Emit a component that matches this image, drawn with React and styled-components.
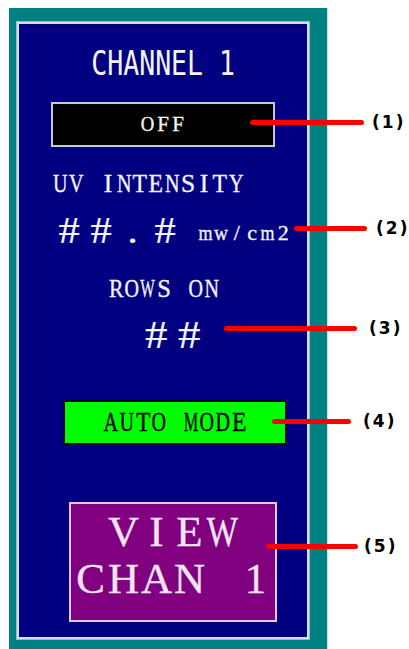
import React from "react";
import styled, { createGlobalStyle } from "styled-components";

const Global = createGlobalStyle`
  html, body { margin: 0; padding: 0; background: #ffffff; }
  body { width: 409px; height: 649px; overflow: hidden; }
`;

const Stage = styled.div`
  position: relative;
  width: 409px;
  height: 649px;
  padding: 8px 0 0 9px;
  box-sizing: border-box;
`;

const Bezel = styled.div`
  width: 319px;
  box-sizing: border-box;
  background: #008080;
  border-right: 1px solid #c8e4e4;
  padding: 14px 18px 10px 8px;
`;

const Panel = styled.div`
  display: flex;
  flex-direction: column;
  align-items: flex-start;
  width: 292px;
  box-sizing: border-box;
  background: #000080;
  border: 2px solid #dcdcf0;
  box-shadow: 0 0 0 1px #86c4c4;
  padding: 22px 0 15px 0;
  font-family: "Liberation Serif", "Times New Roman", serif;
  color: #f4f4f4;
`;

const Title = styled.div`
  align-self: center;
  font-family: "DejaVu Sans Mono", monospace;
  font-size: 34px;
  line-height: 1;
  height: 34px;
  white-space: nowrap;
  transform: scaleX(0.78);
  transform-origin: center;
`;

/* one fixed-width cell per character, like a character-cell HMI font */
const Cell = styled.span`
  display: inline-block;
  width: ${(p) => p.$pitch}px;
  text-align: center;
  white-space: pre;
`;

const Glyph = styled.span`
  display: inline-block;
  margin: 0 ${(p) => p.$m}px;
  transform: scaleX(${(p) => p.$s});
  transform-origin: center;
  -webkit-text-stroke: ${(p) => p.$stroke}px currentColor;
`;

/* Times advance widths (em) for the characters used */
const ADV = {
  U: 0.722, V: 0.722, I: 0.333, N: 0.722, T: 0.611, E: 0.611, S: 0.556,
  Y: 0.722, R: 0.667, O: 0.722, W: 0.944, A: 0.722, M: 0.889, D: 0.722,
  F: 0.556, C: 0.667, H: 0.722, "1": 0.5, m: 0.778, w: 0.722, c: 0.444,
  "/": 0.278, "2": 0.5, "#": 0.5, ".": 0.25, " ": 0.25,
};

const Mono = ({ text, pitch, size, fixed, stroke = 0.35 }) =>
  text.split("").map((ch, i) => {
    const adv = (ADV[ch] ?? 0.6) * size;
    const s = fixed ?? Math.min(1, (pitch - 1.5) / adv);
    const m = s < 1 ? -(adv * (1 - s)) / 2 : 0;
    return (
      <Cell key={i} $pitch={pitch}>
        <Glyph $s={s} $m={m} $stroke={stroke}>{ch === " " ? "\u00a0" : ch}</Glyph>
      </Cell>
    );
  });

const Box = styled.div`
  display: flex;
  align-items: center;
  justify-content: center;
  box-sizing: border-box;
  margin-top: ${(p) => p.$top}px;
  margin-left: ${(p) => p.$left}px;
  width: ${(p) => p.$w}px;
  height: ${(p) => p.$h}px;
  background: ${(p) => p.$bg};
  border: 2px solid ${(p) => p.$border};
  color: ${(p) => p.$fg};
`;

const BoxText = styled.div`
  font-size: ${(p) => p.$size}px;
  line-height: 1;
  white-space: nowrap;
`;

const Label = styled.div`
  margin-top: ${(p) => p.$top}px;
  margin-left: ${(p) => p.$left}px;
  font-size: ${(p) => p.$size}px;
  line-height: 1;
  height: ${(p) => p.$size}px;
  white-space: nowrap;
`;

const ValueRow = styled.div`
  display: flex;
  align-items: flex-start;
  margin-top: ${(p) => p.$top}px;
  margin-left: ${(p) => p.$left}px;
  gap: 17px;
`;

const Hashes = styled.div`
  font-size: ${(p) => p.$size}px;
  line-height: 1;
  height: ${(p) => p.$size}px;
  white-space: nowrap;
`;

const Unit = styled.div`
  margin-top: 10px;
  font-size: 22px;
  line-height: 1;
  white-space: nowrap;
`;

const ViewButton = styled.div`
  display: flex;
  flex-direction: column;
  align-items: center;
  box-sizing: border-box;
  margin-top: 57px;
  margin-left: 50px;
  width: 208px;
  height: 120px;
  padding-top: 4px;
  background: #800080;
  border: 2px solid #e4c8e4;
  color: #f4e4f4;
`;

const ViewLine = styled.div`
  font-size: 43px;
  line-height: 47px;
  height: 47px;
  white-space: nowrap;
`;

const Leader = styled.div`
  position: absolute;
  left: ${(p) => p.$x1}px;
  top: ${(p) => p.$y - 2.5}px;
  width: ${(p) => p.$x2 - p.$x1}px;
  height: 5px;
  border-radius: 3px;
  background: #ff0000;
`;

const Tag = styled.div`
  position: absolute;
  left: ${(p) => p.$x}px;
  top: ${(p) => p.$y - 10}px;
  display: flex;
  gap: 2px;
  height: 20px;
  line-height: 20px;
  font-family: "DejaVu Sans", sans-serif;
  font-weight: bold;
  font-size: 17px;
  color: #000000;
  white-space: nowrap;
`;

const callouts = [
  { n: 1, x1: 250, x2: 364, y: 122, lx: 372 },
  { n: 2, x1: 294, x2: 367, y: 228, lx: 376 },
  { n: 3, x1: 224, x2: 357, y: 328, lx: 369 },
  { n: 4, x1: 272, x2: 351, y: 421, lx: 363 },
  { n: 5, x1: 266, x2: 358, y: 546, lx: 364 },
];

export default function App() {
  return (
    <>
      <Global />
      <Stage>
        <Bezel>
          <Panel>
            <Title>CHANNEL 1</Title>
            <Box $top={22} $left={32} $w={224} $h={45} $bg="#000000" $border="#c8c8d8" $fg="#f4f4f4">
              <BoxText $size={21}>
                <Mono text="OFF" pitch={15} size={21} />
              </BoxText>
            </Box>
            <Label $top={24} $left={33} $size={25.5}>
              <Mono text="UV INTENSITY" pitch={16} size={25.5} />
            </Label>
            <ValueRow $top={15} $left={34}>
              <Hashes $size={37}>
                <Mono text="##.#" pitch={32} size={37} fixed={1.15} stroke={0.2} />
              </Hashes>
              <Unit>
                <Mono text="mw/cm2" pitch={15.5} size={22} />
              </Unit>
            </ValueRow>
            <Label $top={28} $left={89} $size={24.5}>
              <Mono text="ROWS ON" pitch={16} size={24.5} />
            </Label>
            <ValueRow $top={13} $left={121}>
              <Hashes $size={41}>
                <Mono text="##" pitch={32.5} size={41} fixed={1.1} stroke={0.2} />
              </Hashes>
            </ValueRow>
            <Box $top={45} $left={44} $w={224} $h={45} $bg="#00ff00" $border="#000030" $fg="#000000">
              <BoxText $size={27}>
                <Mono text="AUTO MODE" pitch={16} size={27} />
              </BoxText>
            </Box>
            <ViewButton>
              <ViewLine>
                <Mono text="VIEW" pitch={33} size={43} stroke={0.3} />
              </ViewLine>
              <ViewLine>
                <Mono text="CHAN 1" pitch={33} size={43} stroke={0.3} />
              </ViewLine>
            </ViewButton>
          </Panel>
        </Bezel>
        {callouts.map((c) => (
          <React.Fragment key={c.n}>
            <Leader $x1={c.x1} $x2={c.x2} $y={c.y} />
            <Tag $x={c.lx} $y={c.y}>
              <span>(</span>
              <span>{c.n}</span>
              <span>)</span>
            </Tag>
          </React.Fragment>
        ))}
      </Stage>
    </>
  );
}
